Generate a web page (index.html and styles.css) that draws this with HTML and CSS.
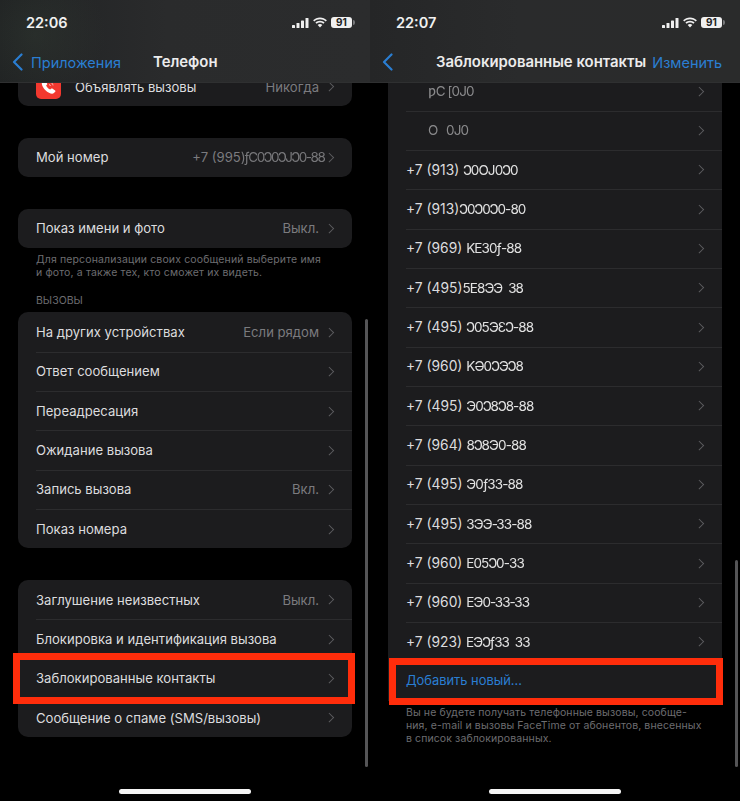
FILE: index.html
```html
<!DOCTYPE html>
<html lang="ru">
<head>
    <meta charset="UTF-8">
    <meta name="viewport" content="width=device-width, initial-scale=1.0">
    <title>Телефон</title>
    <link rel="stylesheet" href="styles.css">
</head>
<body>
    <div class="screens">
        <section class="phone phone-left">
            <header class="topbar">
                <div class="status">
                    <span class="time">22:06</span>
                    <div class="status-icons">
                        <svg width="17" height="10" viewBox="0 0 17 10"><rect x="0" y="7" width="3" height="3" rx=".6"/><rect x="4.5" y="5" width="3" height="5" rx=".6"/><rect x="9" y="2.5" width="3" height="7.5" rx=".6"/><rect x="13.5" y="0" width="3" height="10" rx=".6"/></svg>
                        <svg width="16" height="11" viewBox="0 0 16 11"><path d="M8 2.2c2.2 0 4.2.9 5.7 2.3l1.2-1.3C13.100 1.500 10.700.4 8 .4S2.900 1.500 1.100 3.200l1.200 1.300C3.800 3.100 5.800 2.200 8 2.200z"/><path d="M8 5.500c1.300 0 2.500.5 3.400 1.300l1.200-1.300C11.400 4.400 9.800 3.700 8 3.700s-3.400.7-4.600 1.800l1.200 1.300C5.500 6 6.700 5.500 8 5.500z"/><path d="M8 7c-.9 0-1.700.3-2.300.9L8 10.500l2.300-2.600C9.700 7.300 8.900 7 8 7z"/></svg>
                        <span class="battery">91</span>
                    </div>
                </div>
                <nav class="navbar">
                    <a class="back">
                        <svg class="back-icon" width="11" height="18" viewBox="0 0 11 18"><path d="M9.500 1.500 2 9l7.500 7.500"/></svg>
                        <span>Приложения</span>
                    </a>
                    <h1 class="nav-title title-phone">Телефон</h1>
                </nav>
            </header>
            <div class="content content-left">
                <div class="card">
                    <div class="row">
                        <span class="app-icon">
                            <svg width="25" height="25" viewBox="0 0 25 25"><path class="handset" d="M6.500 7.500c-1 1-1 2.800.3 5.200 1.500 2.700 3.600 4.800 6.200 6.100 2.200 1.100 3.900 1.100 4.900.2l1.300-1.200c.4-.4.300-1-.1-1.300l-2.800-1.900c-.4-.3-.9-.2-1.200.1l-.9.9c-1.500-.6-3.400-2.500-4.100-4.100l.9-.9c.3-.3.400-.8.100-1.200L9.200 6.600c-.3-.4-.9-.5-1.300-.1z"/><path class="waves" d="M13 10.500c.8.100 1.400.7 1.500 1.500M13.500 8c1.900.1 3.300 1.500 3.500 3.400"/></svg>
                        </span>
                        <span class="label">Объявлять вызовы</span>
                        <span class="value">Никогда</span>
                        <i class="chevron"></i>
                    </div>
                </div>
                <div class="card">
                    <div class="row">
                        <span class="label">Мой номер</span>
                        <span class="value smudge-value">+7 (995<span class="smudge">)ƒC0Ͻ0ϽJϽ0-88</span></span>
                        <i class="chevron"></i>
                    </div>
                </div>
                <div class="card">
                    <div class="row">
                        <span class="label">Показ имени и фото</span>
                        <span class="value">Выкл.</span>
                        <i class="chevron"></i>
                    </div>
                </div>
                <p class="note note-name">Для персонализации своих сообщений выберите имя<br>и фото, а также тех, кто сможет их видеть.</p>
                <h2 class="group-title">ВЫЗОВЫ</h2>
                <div class="card card-calls">
                    <div class="row"><span class="label">На других устройствах</span><span class="value">Если рядом</span><i class="chevron"></i></div>
                    <div class="row"><span class="label">Ответ сообщением</span><i class="chevron"></i></div>
                    <div class="row"><span class="label">Переадресация</span><i class="chevron"></i></div>
                    <div class="row"><span class="label">Ожидание вызова</span><i class="chevron"></i></div>
                    <div class="row"><span class="label">Запись вызова</span><span class="value">Вкл.</span><i class="chevron"></i></div>
                    <div class="row"><span class="label">Показ номера</span><i class="chevron"></i></div>
                </div>
                <div class="card">
                    <div class="row"><span class="label">Заглушение неизвестных</span><span class="value">Выкл.</span><i class="chevron"></i></div>
                    <div class="row"><span class="label">Блокировка и идентификация вызова</span><i class="chevron"></i></div>
                    <div class="row marked marked-left"><span class="label">Заблокированные контакты</span><i class="chevron"></i></div>
                    <div class="row"><span class="label">Сообщение о спаме (SMS/вызовы)</span><i class="chevron"></i></div>
                </div>
            </div>
            <div class="scrollbar scrollbar-left"></div>
            <div class="home-bar"></div>
        </section>

        <section class="phone phone-right">
            <header class="topbar">
                <div class="status">
                    <span class="time">22:07</span>
                    <div class="status-icons">
                        <svg width="17" height="10" viewBox="0 0 17 10"><rect x="0" y="7" width="3" height="3" rx=".6"/><rect x="4.5" y="5" width="3" height="5" rx=".6"/><rect x="9" y="2.5" width="3" height="7.5" rx=".6"/><rect x="13.5" y="0" width="3" height="10" rx=".6"/></svg>
                        <svg width="16" height="11" viewBox="0 0 16 11"><path d="M8 2.2c2.2 0 4.2.9 5.7 2.3l1.2-1.3C13.100 1.500 10.700.4 8 .4S2.900 1.500 1.100 3.200l1.200 1.300C3.800 3.100 5.800 2.200 8 2.200z"/><path d="M8 5.500c1.300 0 2.500.5 3.400 1.300l1.200-1.300C11.400 4.400 9.800 3.700 8 3.700s-3.400.7-4.600 1.800l1.200 1.300C5.500 6 6.700 5.500 8 5.500z"/><path d="M8 7c-.9 0-1.700.3-2.300.9L8 10.500l2.300-2.600C9.700 7.300 8.900 7 8 7z"/></svg>
                        <span class="battery">91</span>
                    </div>
                </div>
                <nav class="navbar">
                    <a class="back">
                        <svg class="back-icon" width="11" height="18" viewBox="0 0 11 18"><path d="M9.500 1.500 2 9l7.500 7.500"/></svg>
                    </a>
                    <h1 class="nav-title title-blocked">Заблокированные контакты</h1>
                    <a class="nav-action">Изменить</a>
                </nav>
            </header>
            <div class="content content-right">
                <div class="card">
                    <div class="row"><span class="label"><span class="number-gap"></span><span class="smudge smudge-dim">ƿC [0J0</span></span><i class="chevron"></i></div>
                    <div class="row"><span class="label"><span class="number-gap"></span><span class="smudge smudge-dim smudge-wide">O &nbsp; 0J0</span></span><i class="chevron"></i></div>
                    <div class="row"><span class="label number">+7 (913) <span class="smudge">Ͻ0OJ0Ͻ0</span></span><i class="chevron"></i></div>
                    <div class="row"><span class="label number">+7 (913)<span class="smudge">Ͻ0Ͻ0Ͻ0-80</span></span><i class="chevron"></i></div>
                    <div class="row"><span class="label number">+7 (969) <span class="smudge">KEЗ0ƒ-88</span></span><i class="chevron"></i></div>
                    <div class="row"><span class="label number">+7 (495)<span class="smudge">5Е8ЭЭ &nbsp;З8</span></span><i class="chevron"></i></div>
                    <div class="row"><span class="label number">+7 (495) <span class="smudge">Ͻ05ЭƐϽ-88</span></span><i class="chevron"></i></div>
                    <div class="row"><span class="label number">+7 (960) <span class="smudge">KƏ0ϽЭϽ8</span></span><i class="chevron"></i></div>
                    <div class="row"><span class="label number">+7 (495) <span class="smudge">Э0Ͻ8Ͻ8-88</span></span><i class="chevron"></i></div>
                    <div class="row"><span class="label number">+7 (964) <span class="smudge">8Ͻ8Э0-88</span></span><i class="chevron"></i></div>
                    <div class="row"><span class="label number">+7 (495) <span class="smudge">Э0ƒЗЗ-88</span></span><i class="chevron"></i></div>
                    <div class="row"><span class="label number">+7 (495) <span class="smudge">ЗЭЭ-ЗЗ-88</span></span><i class="chevron"></i></div>
                    <div class="row"><span class="label number">+7 (960) <span class="smudge">Е05Ͻ0-ЗЗ</span></span><i class="chevron"></i></div>
                    <div class="row"><span class="label number">+7 (960) <span class="smudge">ЕЭ0-ЗЗ-ЗЗ</span></span><i class="chevron"></i></div>
                    <div class="row"><span class="label number">+7 (923) <span class="smudge">ЕЭϽƒЗЗ &nbsp;ЗЗ</span></span><i class="chevron"></i></div>
                    <div class="row marked marked-right"><span class="label link">Добавить новый...</span></div>
                </div>
                <p class="note note-blocked">Вы не будете получать телефонные вызовы, сообще-<br>ния, e-mail и вызовы FaceTime от абонентов, внесенных<br>в список заблокированных.</p>
            </div>
            <div class="scrollbar scrollbar-right"></div>
            <div class="home-bar"></div>
        </section>
    </div>
</body>
</html>
```

FILE: styles.css
```css
* {
    box-sizing: border-box;
}
html, body {
    margin: 0;
    height: 100%;
    background: #000;
}
body {
    font-family: 'Inter', 'Liberation Sans', sans-serif;
    color: #dedee0;
    overflow: hidden;
}
.screens {
    display: flex;
    width: 740px;
    height: 801px;
}
.phone {
    position: relative;
    width: 370px;
    height: 801px;
    overflow: hidden;
}
.topbar {
    position: relative;
    z-index: 2;
    height: 83px;
    border-bottom: 1px solid #2f3031;
}
.phone-left .topbar {
    background:
        radial-gradient(ellipse 70px 70px at 35px 35px, rgba(60, 75, 60, 0.25), rgba(60, 75, 60, 0)),
        linear-gradient(90deg, #202223 0%, #2a2b2c 45%, #2b2c2d 100%);
}
.phone-right .topbar {
    background: linear-gradient(90deg, #252627 0%, #2a2b2c 40%, #2a2b2b 100%);
}
.status {
    display: flex;
    align-items: center;
    justify-content: space-between;
    height: 45px;
    padding: 0 18px 0 26px;
}
.time {
    font-size: 14.5px;
    font-weight: 600;
    color: #f1f1f1;
}
.status-icons {
    display: flex;
    align-items: center;
    gap: 3px;
    fill: #f0f0f0;
}
.battery {
    position: relative;
    width: 21px;
    height: 11.500px;
    border-radius: 3px;
    background: #f0f0f0;
    color: #222;
    font-size: 10px;
    font-weight: 700;
    line-height: 11.500px;
    text-align: center;
}
.battery::after {
    content: "";
    position: absolute;
    top: 3.500px;
    right: -2.500px;
    width: 1.500px;
    height: 4.500px;
    border-radius: 0 2px 2px 0;
    background: #77787a;
}
.navbar {
    display: flex;
    align-items: center;
    height: 34px;
    padding-left: 12px;
    font-size: 14.500px;
}
.back {
    display: flex;
    align-items: center;
    gap: 8px;
    color: #2a7ed2;
}
.back-icon {
    fill: none;
    stroke: #2a7ed2;
    stroke-width: 2.200;
    stroke-linecap: round;
    stroke-linejoin: round;
}
.nav-title {
    margin: 0;
    font-size: 14.900px;
    font-weight: 600;
    color: #ececec;
}
.title-phone {
    margin-left: 32px;
}
.title-blocked {
    margin-left: 43px;
    white-space: nowrap;
}
.nav-action {
    margin-left: 6px;
    color: #2a7ed2;
    white-space: nowrap;
}
.content {
    width: 334px;
}
.content-left {
    margin: -16px 0 0 18px;
}
.content-right {
    margin: -11.700px 0 0 18px;
}
.card {
    background: #1c1c1e;
    border-radius: 10px;
    margin-bottom: 31.500px;
}
.phone-right .card {
    margin-bottom: 0;
    border-radius: 0;
}
.row {
    position: relative;
    display: flex;
    align-items: center;
    height: 39.330px;
    padding: 0 20px 0 18px;
    font-size: 13.100px;
}
.row + .row::before {
    content: "";
    position: absolute;
    top: 0;
    left: 18px;
    right: 0;
    height: 1px;
    background: #2c2c2e;
}
.label {
    flex: 1;
    white-space: nowrap;
    color: #dcdcde;
}
.number {
    font-size: 13.800px;
}
.value {
    color: #7b7b7f;
    margin-right: 6.500px;
    white-space: nowrap;
}
.smudge-value {
    margin-right: 1px;
}
.chevron {
    width: 6.500px;
    height: 6.500px;
    border-top: 1.500px solid #5c5c5f;
    border-right: 1.500px solid #5c5c5f;
    transform: rotate(45deg);
}
.app-icon {
    width: 25px;
    height: 25px;
    margin-right: 14px;
    border-radius: 5px;
    background: #f2382f;
}
.app-icon svg {
    display: block;
}
.handset {
    fill: #fff;
}
.waves {
    fill: none;
    stroke: #fff;
    stroke-width: 1;
    opacity: 0.6;
}
.smudge {
    display: inline-block;
    font-size: 13.500px;
    letter-spacing: -0.900px;
    color: #e2e2e2;
    filter: blur(0.3px);
    white-space: pre;
}
.smudge-value .smudge {
    color: #77777a;
    letter-spacing: -1.400px;
}
.smudge-dim {
    color: #8a8a8c;
}
.number-gap {
    display: inline-block;
    width: 22px;
}
.note {
    margin: 0;
    padding: 0 18px;
    font-size: 10.500px;
    line-height: 13px;
    color: #6d6d70;
    letter-spacing: 0.140px;
    white-space: nowrap;
}
.note-name {
    margin-top: -26px;
}
.note-blocked {
    margin-top: 5px;
    letter-spacing: 0.100px;
}
.group-title {
    margin: 15px 0 5px;
    padding: 0 18px;
    font-size: 10.500px;
    font-weight: 400;
    line-height: 13px;
    color: #6d6d70;
}
.link {
    color: #2a7ed2;
    font-size: 12.900px;
}
.marked {
    z-index: 1;
}
.marked::after {
    content: "";
    position: absolute;
    border: 7px solid #ff2d0b;
}
.marked-left::after {
    top: -6px;
    bottom: -6px;
    left: -5px;
    right: -3px;
}
.marked-right::after {
    top: -3px;
    bottom: -4.500px;
    left: 1px;
    right: -1px;
}
.scrollbar {
    position: absolute;
    bottom: 34px;
    width: 3px;
    border-radius: 2px;
    background: #555557;
}
.scrollbar-left {
    top: 319px;
    left: 365px;
}
.scrollbar-right {
    top: 560px;
    left: 365px;
}
.home-bar {
    position: absolute;
    left: 119px;
    bottom: 7px;
    width: 132px;
    height: 5px;
    border-radius: 3px;
    background: #f4f4f4;
}
```
